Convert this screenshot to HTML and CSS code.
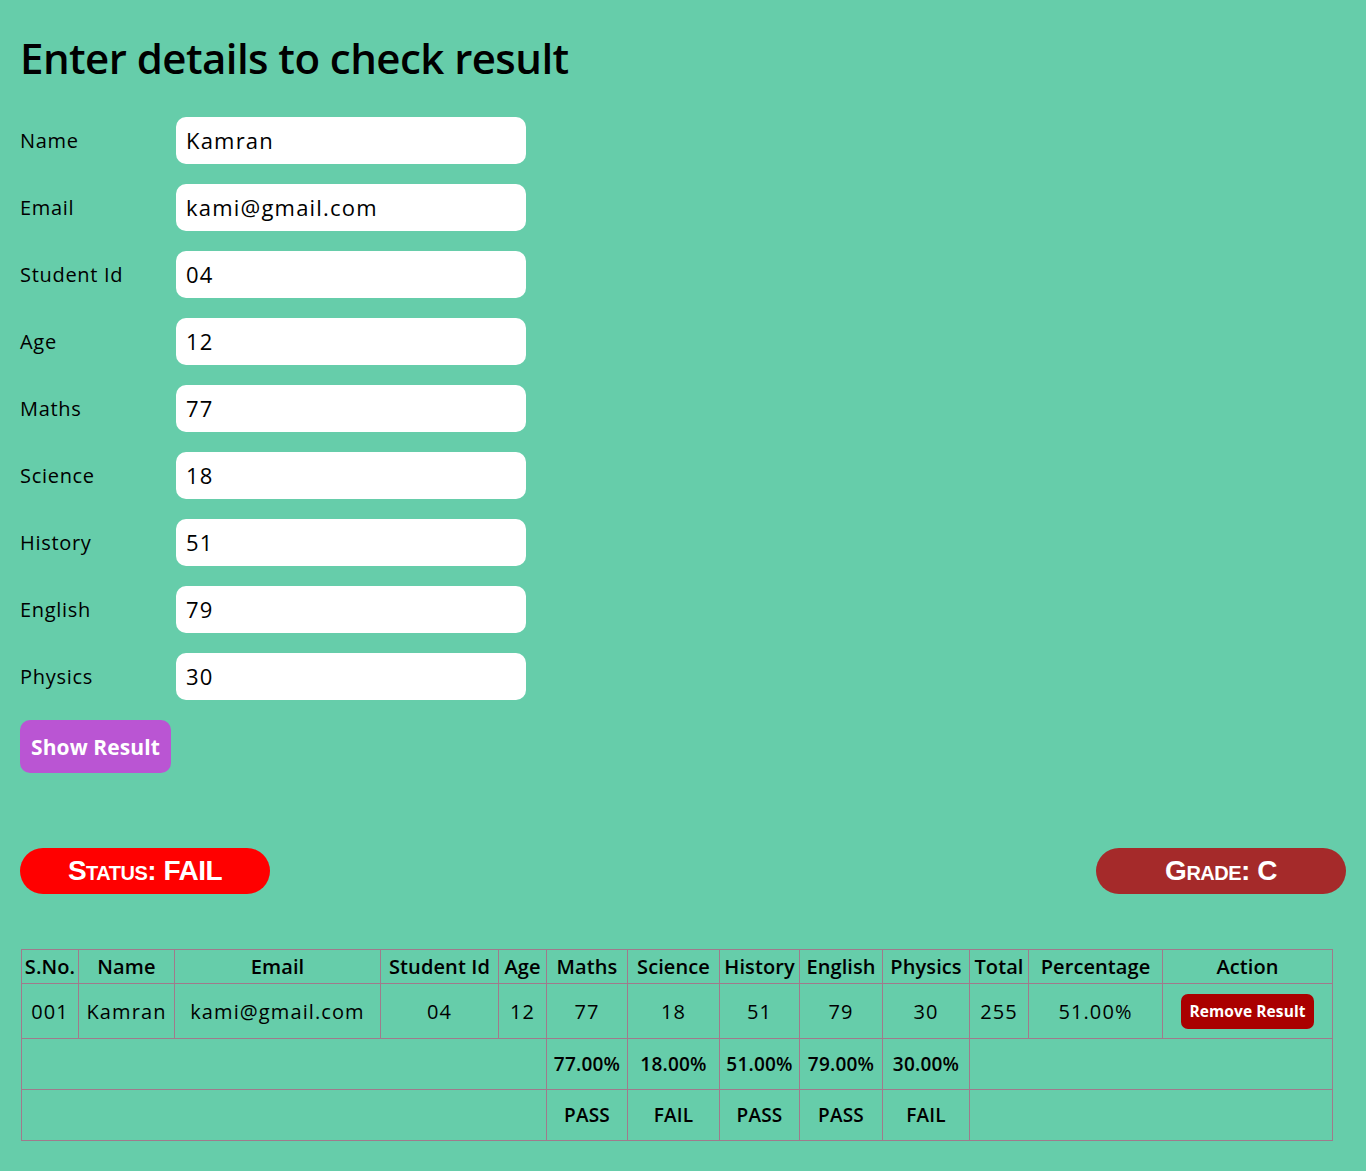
FILE: index.html
```html
<!DOCTYPE html>
<html lang="en">
<head>
<meta charset="utf-8">
<title>Result</title>
<link rel="stylesheet" href="styles.css">
</head>
<body>
<h1 class="title">Enter details to check result</h1>
<form class="form">
  <label class="lbl">Name</label><input class="inp" type="text" value="Kamran">
  <label class="lbl">Email</label><input class="inp" type="text" value="kami@gmail.com">
  <label class="lbl">Student Id</label><input class="inp" type="text" value="04">
  <label class="lbl">Age</label><input class="inp" type="text" value="12">
  <label class="lbl">Maths</label><input class="inp" type="text" value="77">
  <label class="lbl">Science</label><input class="inp" type="text" value="18">
  <label class="lbl">History</label><input class="inp" type="text" value="51">
  <label class="lbl">English</label><input class="inp" type="text" value="79">
  <label class="lbl">Physics</label><input class="inp" type="text" value="30">
</form>
<button class="show-btn" type="button">Show Result</button>
<div class="badges">
  <div class="pill pill-status">Status: FAIL</div>
  <div class="pill pill-grade">Grade: C</div>
</div>
<table class="results">
  <colgroup>
    <col class="c1"><col class="c2"><col class="c3"><col class="c4"><col class="c5"><col class="c6"><col class="c7"><col class="c8"><col class="c9"><col class="c10"><col class="c11"><col class="c12"><col class="c13">
  </colgroup>
  <thead>
    <tr><th>S.No.</th><th>Name</th><th>Email</th><th>Student Id</th><th>Age</th><th>Maths</th><th>Science</th><th>History</th><th>English</th><th>Physics</th><th>Total</th><th>Percentage</th><th>Action</th></tr>
  </thead>
  <tbody>
    <tr class="data"><td>001</td><td>Kamran</td><td>kami@gmail.com</td><td>04</td><td>12</td><td>77</td><td>18</td><td>51</td><td>79</td><td>30</td><td>255</td><td>51.00%</td><td><button class="remove-btn" type="button">Remove Result</button></td></tr>
    <tr class="sub"><td colspan="5"></td><td>77.00%</td><td>18.00%</td><td>51.00%</td><td>79.00%</td><td>30.00%</td><td colspan="3"></td></tr>
    <tr class="sub"><td colspan="5"></td><td>PASS</td><td>FAIL</td><td>PASS</td><td>PASS</td><td>FAIL</td><td colspan="3"></td></tr>
  </tbody>
</table>
</body>
</html>
```
FILE: styles.css
```css
html, body {
  margin: 0;
  padding: 0;
}
body {
  background: #66cdaa;
  font-family: "Open Sans", "Noto Sans", sans-serif;
  color: #000;
  padding: 0 20px 30px 20px;
}
.title {
  font-size: 42px;
  font-weight: 600;
  margin: 0;
  padding-top: 29px;
  line-height: 58px;
  letter-spacing: -0.55px;
  height: 88px;
}
.form {
  display: grid;
  grid-template-columns: 156px 350px;
  row-gap: 20px;
  align-items: center;
}
.lbl {
  font-size: 20px;
  letter-spacing: 0.7px;
  line-height: 47px;
}
.inp {
  height: 47px;
  box-sizing: border-box;
  border: none;
  border-radius: 10px;
  background: #fff;
  padding: 0 10px 2px 10px;
  font-family: inherit;
  font-size: 22px;
  letter-spacing: 1.2px;
  color: #000;
  outline: none;
}
.show-btn {
  display: block;
  margin-top: 20px;
  width: 151px;
  height: 53px;
  border: none;
  border-radius: 10px;
  background: #ba55d3;
  color: #fff;
  font-family: inherit;
  font-weight: 700;
  font-size: 21px;
  letter-spacing: 0.1px;
  padding: 0;
}
.badges {
  display: flex;
  justify-content: space-between;
  margin-top: 75px;
}
.pill {
  width: 250px;
  height: 46px;
  border-radius: 23px;
  color: #fff;
  font-family: "Liberation Sans", sans-serif;
  font-weight: 700;
  font-variant: small-caps;
  font-size: 28px;
  line-height: 46px;
  text-align: center;
  letter-spacing: -0.5px;
}
.pill-status { background: #ff0000; }
.pill-grade { background: #a52a2a; }
.results {
  margin-top: 55px;
  margin-left: 1px;
  border-collapse: collapse;
  table-layout: fixed;
  width: 1312px;
  font-size: 20px;
}
.results th, .results td {
  border: 1px solid #a07a8c;
  text-align: center;
  padding: 0;
  white-space: nowrap;
  overflow: hidden;
}
.results th {
  font-weight: 600;
  height: 33px;
  letter-spacing: 0.1px;
}
.results .data td {
  height: 54px;
  font-weight: 400;
  letter-spacing: 1.1px;
}
.results .sub td {
  height: 50px;
  font-weight: 600;
  font-size: 19px;
  letter-spacing: 0.2px;
}
.c1 { width: 57px; }
.c2 { width: 96px; }
.c3 { width: 206px; }
.c4 { width: 118px; }
.c5 { width: 48px; }
.c6 { width: 81px; }
.c7 { width: 92px; }
.c8 { width: 80px; }
.c9 { width: 83px; }
.c10 { width: 87px; }
.c11 { width: 59px; }
.c12 { width: 134px; }
.c13 { width: 170px; }
.remove-btn {
  width: 133px;
  height: 35px;
  border: none;
  border-radius: 7px;
  background: #aa0000;
  color: #fff;
  font-family: inherit;
  font-weight: 700;
  font-size: 15.5px;
  letter-spacing: 0.1px;
  padding: 0;
  vertical-align: middle;
}
```
